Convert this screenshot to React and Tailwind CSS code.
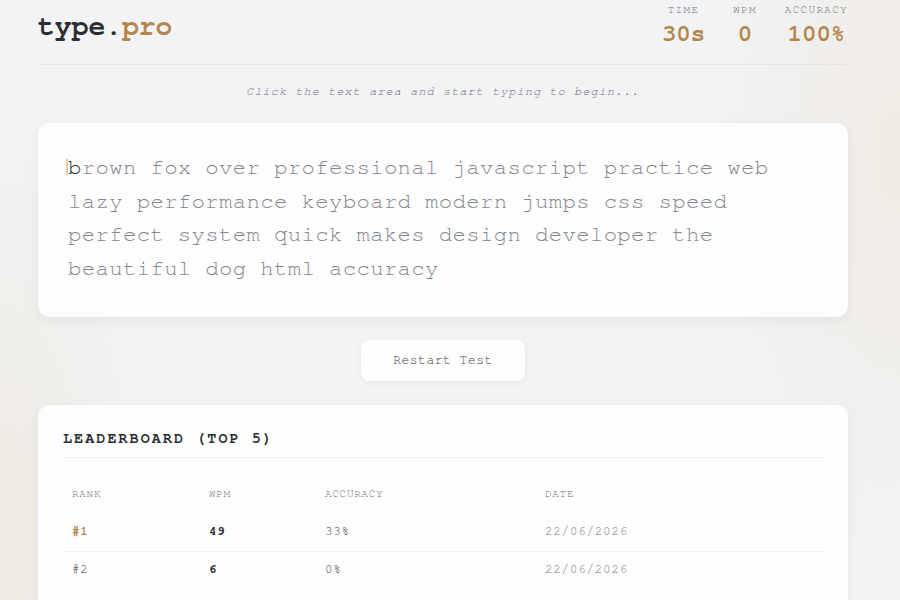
import React from 'react'

const words =
  'brown fox over professional javascript practice web lazy performance keyboard modern jumps css speed perfect system quick makes design developer the beautiful dog html accuracy'

const rows = [
  { rank: '#1', wpm: 49, acc: '33%', date: '22/06/2026' },
  { rank: '#2', wpm: 6, acc: '0%', date: '22/06/2026' },
]

const Stat = ({ label, value }) => (
  <div className="flex flex-col items-center">
    <span className="text-[11px] leading-[14px] tracking-[1.3px] text-[#6f7279]">{label}</span>
    <span className="text-[24px] leading-[34px] font-bold text-[#b5864c]">{value}</span>
  </div>
)

const App = () => {
  return (
    <div className="min-h-screen w-full overflow-hidden bg-[#f2f3f5] bg-[radial-gradient(ellipse_160px_420px_at_0%_85%,#efebe3_0%,transparent_100%),radial-gradient(ellipse_200px_420px_at_100%_25%,#f0ebe4_0%,transparent_100%)] text-[#2b2d31] font-['FreeMono','TeX_Gyre_Cursor','Liberation_Mono',monospace]">
      <div className="ml-[38px] w-[810px]">
        {/* Header */}
        <header className="flex items-center justify-between pt-[3px] pb-[13px] border-b border-[#e4e5e8]">
          <h1 className="text-[28px] leading-[36px] font-bold">
            type.<span className="text-[#b5864c]">pro</span>
          </h1>
          <div className="flex gap-7">
            <Stat label="TIME" value="30s" />
            <Stat label="WPM" value="0" />
            <Stat label="ACCURACY" value="100%" />
          </div>
        </header>

        <p className="text-center italic text-[12px] tracking-[1px] text-[#6f7279] mt-[19px] leading-[14px]">
          Click the text area and start typing to begin...
        </p>

        {/* Typing area */}
        <div className="mt-[25px] rounded-xl bg-[#fdfdfd] shadow-[0_4px_14px_rgba(0,0,0,0.05)] px-[30px] pt-[28px] pb-[32px]">
          <p className="text-[22.4px] leading-[33.5px] tracking-[0.3px] text-[#83868d]">
            <span className="relative text-[#2b2d31]">
              <span className="absolute -left-[2px] top-[3px] bottom-[3px] w-[2px] bg-[#e2cfa8]" />
              b
            </span>
            {words.slice(1)}
          </p>
        </div>

        <div className="flex justify-center mt-[23px]">
          <button className="w-[164px] h-[41px] rounded-lg bg-[#fdfdfd] shadow-[0_2px_8px_rgba(0,0,0,0.05)] text-[13px] tracking-[0.5px] text-[#3f4146]">
            Restart Test
          </button>
        </div>

        {/* Leaderboard */}
        <div className="mt-[24px] rounded-xl bg-[#fdfdfd] shadow-[0_4px_14px_rgba(0,0,0,0.05)] px-[25px] pt-[24px] pb-6">
          <h2 className="text-[15px] leading-[20px] font-bold tracking-[2.1px] pb-[8px] border-b border-[#eeeff1]">
            LEADERBOARD (TOP 5)
          </h2>
          <div className="mt-[18px]">
            <div className="grid grid-cols-[137px_116px_220px_1fr] h-[37px] items-center text-[11px] tracking-[0.7px] text-[#6f7279]">
              <span className="pl-[9px]">RANK</span>
              <span className="pl-[9px]">WPM</span>
              <span className="pl-[9px]">ACCURACY</span>
              <span className="pl-[9px]">DATE</span>
            </div>
            {rows.map((r, i) => (
              <div
                key={r.rank}
                className={`grid grid-cols-[137px_116px_220px_1fr] h-[38px] items-center text-[12.5px] tracking-[0.8px] ${i > 0 ? 'border-t border-[#eeeff1]' : ''}`}
              >
                <span className={`pl-[9px] ${i === 0 ? 'text-[#b5864c] font-bold' : 'text-[#3f4146]'}`}>{r.rank}</span>
                <span className="pl-[9px] font-bold text-[#2b2d31]">{r.wpm}</span>
                <span className="pl-[9px] text-[#3f4146]">{r.acc}</span>
                <span className="pl-[9px] text-[#75787f]">{r.date}</span>
              </div>
            ))}
          </div>
        </div>
      </div>
    </div>
  )
}

export default App
